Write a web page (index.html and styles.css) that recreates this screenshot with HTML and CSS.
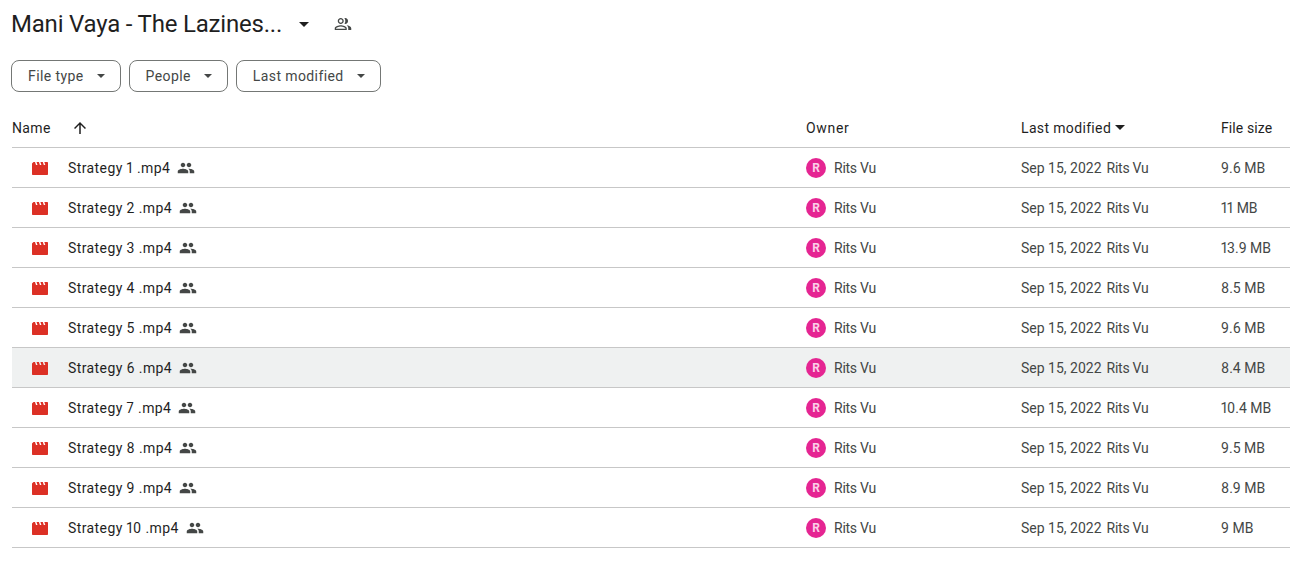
FILE: index.html
```html
<!DOCTYPE html>
<html lang="en">
<head>
    <meta charset="UTF-8">
    <title>Mani Vaya - The Laziness</title>
    <link rel="stylesheet" href="styles.css">
</head>
<body>
    <svg class="svg-defs" width="0" height="0">
        <symbol id="film" viewBox="0 0 16 13"><path d="M0 1.500 1.500 0H3l1 3h1.500L4.500 0h2.400l1 3h1.500l-1-3h2.400l1 3h1.500l-1-3H15c.6 0 1 .4 1 1v11c0 .6-.4 1-1 1H1c-.6 0-1-.4-1-1z"/></symbol>
        <symbol id="people" viewBox="0 0 24 24"><path d="M16 11c1.660 0 2.990-1.340 2.990-3S17.660 5 16 5s-3 1.340-3 3 1.340 3 3 3zm-8 0c1.660 0 2.990-1.340 2.990-3S9.660 5 8 5 5 6.340 5 8s1.340 3 3 3zm0 2c-2.330 0-7 1.170-7 3.500V19h14v-2.500C15 14.170 10.330 13 8 13zm8 0c-.29 0-.62.020-.97.050 1.160.84 1.970 1.970 1.970 3.450V19h6v-2.500c0-2.330-4.670-3.500-7-3.500z"/></symbol>
    </svg>

    <header class="title-bar">
        <h1>Mani Vaya - The Lazines...</h1>
        <span class="caret title-caret"></span>
        <svg class="shared-outline" viewBox="0 0 24 24"><path d="M9 12c2.200 0 4-1.800 4-4s-1.800-4-4-4-4 1.800-4 4 1.800 4 4 4zm0-6.200c1.200 0 2.200 1 2.200 2.200s-1 2.200-2.200 2.200-2.200-1-2.200-2.200 1-2.200 2.200-2.200zM15 12c2.200 0 3.700-1.800 3.700-4S17.200 4 15 4c-.4 0-.8.100-1.100.2.800 1 1.200 2.400 1.200 3.800s-.4 2.800-1.200 3.800c.3.100.7.200 1.100.2zM9 13.500c-2.700 0-8 1.300-8 4V20h16v-2.500c0-2.700-5.300-4-8-4zm-6.200 4.700v-.7c0-.7 3.300-2.200 6.200-2.200s6.200 1.500 6.200 2.200v.7H2.800zM16.800 13.700c1.300.9 2.200 2.200 2.200 3.800V20h4v-2.500c0-2.200-3.500-3.500-6.200-3.800z"/></svg>
    </header>

    <div class="filters">
        <button class="filter">File type<span class="caret small"></span></button>
        <button class="filter">People<span class="caret small"></span></button>
        <button class="filter">Last modified<span class="caret small"></span></button>
    </div>

    <div class="file-list">
        <div class="row head">
            <div class="name-head">Name
                <svg class="sort-arrow" viewBox="0 0 24 24"><path d="M4 12l1.410 1.410L11 7.830V20h2V7.830l5.580 5.590L20 12l-8-8-8 8z"/></svg>
            </div>
            <div class="owner-head">Owner</div>
            <div class="mod-head">Last modified<span class="caret"></span></div>
            <div class="size-head">File size</div>
        </div>

        <div class="row">
            <div class="name"><svg class="film"><use href="#film"/></svg><span>Strategy 1 .mp4</span><svg class="people"><use href="#people"/></svg></div>
            <div class="owner"><span class="avatar">R</span><span class="person">Rits Vu</span></div>
            <div class="modified"><span>Sep 15, 2022</span><span class="person">Rits Vu</span></div>
            <div class="size">9.6 MB</div>
        </div>
        <div class="row">
            <div class="name"><svg class="film"><use href="#film"/></svg><span>Strategy 2 .mp4</span><svg class="people"><use href="#people"/></svg></div>
            <div class="owner"><span class="avatar">R</span><span class="person">Rits Vu</span></div>
            <div class="modified"><span>Sep 15, 2022</span><span class="person">Rits Vu</span></div>
            <div class="size">11 MB</div>
        </div>
        <div class="row">
            <div class="name"><svg class="film"><use href="#film"/></svg><span>Strategy 3 .mp4</span><svg class="people"><use href="#people"/></svg></div>
            <div class="owner"><span class="avatar">R</span><span class="person">Rits Vu</span></div>
            <div class="modified"><span>Sep 15, 2022</span><span class="person">Rits Vu</span></div>
            <div class="size">13.9 MB</div>
        </div>
        <div class="row">
            <div class="name"><svg class="film"><use href="#film"/></svg><span>Strategy 4 .mp4</span><svg class="people"><use href="#people"/></svg></div>
            <div class="owner"><span class="avatar">R</span><span class="person">Rits Vu</span></div>
            <div class="modified"><span>Sep 15, 2022</span><span class="person">Rits Vu</span></div>
            <div class="size">8.5 MB</div>
        </div>
        <div class="row">
            <div class="name"><svg class="film"><use href="#film"/></svg><span>Strategy 5 .mp4</span><svg class="people"><use href="#people"/></svg></div>
            <div class="owner"><span class="avatar">R</span><span class="person">Rits Vu</span></div>
            <div class="modified"><span>Sep 15, 2022</span><span class="person">Rits Vu</span></div>
            <div class="size">9.6 MB</div>
        </div>
        <div class="row hover">
            <div class="name"><svg class="film"><use href="#film"/></svg><span>Strategy 6 .mp4</span><svg class="people"><use href="#people"/></svg></div>
            <div class="owner"><span class="avatar">R</span><span class="person">Rits Vu</span></div>
            <div class="modified"><span>Sep 15, 2022</span><span class="person">Rits Vu</span></div>
            <div class="size">8.4 MB</div>
        </div>
        <div class="row">
            <div class="name"><svg class="film"><use href="#film"/></svg><span>Strategy 7 .mp4</span><svg class="people"><use href="#people"/></svg></div>
            <div class="owner"><span class="avatar">R</span><span class="person">Rits Vu</span></div>
            <div class="modified"><span>Sep 15, 2022</span><span class="person">Rits Vu</span></div>
            <div class="size">10.4 MB</div>
        </div>
        <div class="row">
            <div class="name"><svg class="film"><use href="#film"/></svg><span>Strategy 8 .mp4</span><svg class="people"><use href="#people"/></svg></div>
            <div class="owner"><span class="avatar">R</span><span class="person">Rits Vu</span></div>
            <div class="modified"><span>Sep 15, 2022</span><span class="person">Rits Vu</span></div>
            <div class="size">9.5 MB</div>
        </div>
        <div class="row">
            <div class="name"><svg class="film"><use href="#film"/></svg><span>Strategy 9 .mp4</span><svg class="people"><use href="#people"/></svg></div>
            <div class="owner"><span class="avatar">R</span><span class="person">Rits Vu</span></div>
            <div class="modified"><span>Sep 15, 2022</span><span class="person">Rits Vu</span></div>
            <div class="size">8.9 MB</div>
        </div>
        <div class="row">
            <div class="name"><svg class="film"><use href="#film"/></svg><span>Strategy 10 .mp4</span><svg class="people"><use href="#people"/></svg></div>
            <div class="owner"><span class="avatar">R</span><span class="person">Rits Vu</span></div>
            <div class="modified"><span>Sep 15, 2022</span><span class="person">Rits Vu</span></div>
            <div class="size">9 MB</div>
        </div>
    </div>
</body>
</html>
```
FILE: styles.css
```css
* {
    box-sizing: border-box;
    margin: 0;
    padding: 0;
}

body {
    font-family: Roboto, "Liberation Sans", sans-serif;
    font-size: 14px;
    color: #444746;
    background: #fff;
    padding-left: 12px;
    overflow: hidden;
}

.svg-defs {
    display: block;
    height: 0;
}

.title-bar {
    display: flex;
    align-items: center;
    height: 48px;
}

.title-bar h1 {
    font-size: 24px;
    font-weight: 400;
    letter-spacing: -0.2px;
    color: #1f1f1f;
    width: 288px;
    margin-left: -1px;
    white-space: nowrap;
}

.caret {
    display: inline-block;
    width: 0;
    height: 0;
    border-left: 5px solid transparent;
    border-right: 5px solid transparent;
    border-top: 5px solid #1f1f1f;
}

.caret.small {
    border-left-width: 4px;
    border-right-width: 4px;
    border-top-width: 4px;
    border-top-color: #444746;
    margin-left: 13px;
}

.title-caret {
    margin-right: 25px;
}

.shared-outline {
    width: 18px;
    height: 18px;
    fill: #444746;
}

.filters {
    display: flex;
    gap: 8px;
    margin-top: 12px;
    margin-left: -1px;
}

.filter {
    display: flex;
    align-items: center;
    height: 32px;
    padding: 0 15px 0 16px;
    border: 1px solid #747775;
    border-radius: 8px;
    background: #fff;
    color: #444746;
    font-family: inherit;
    font-size: 14px;
    letter-spacing: 0.4px;
}

.file-list {
    margin-top: 16px;
}

.row {
    display: grid;
    grid-template-columns: 794px 215px 200px 1fr;
    align-items: center;
    height: 40px;
    border-bottom: 1px solid #c7c7c7;
}

.row.head {
    color: #1f1f1f;
    letter-spacing: 0.35px;
}

.row.hover {
    background: #eff1f1;
}

.name-head {
    display: flex;
    align-items: center;
}

.owner-head {
    letter-spacing: 0.7px;
}

.size-head {
    letter-spacing: 0.1px;
}

.sort-arrow {
    width: 18px;
    height: 18px;
    fill: #1f1f1f;
    margin-left: 20px;
}

.mod-head {
    display: flex;
    align-items: center;
}

.mod-head .caret {
    margin-left: 4px;
}

.name {
    display: flex;
    align-items: center;
    color: #1f1f1f;
    letter-spacing: 0.4px;
    font-variant-numeric: proportional-nums;
}

.film {
    width: 16px;
    height: 13px;
    fill: #dc3025;
    margin: 2px 20px 0;
}

.people {
    width: 18px;
    height: 18px;
    fill: #444746;
    margin-left: 7px;
}

.owner {
    display: flex;
    align-items: center;
    gap: 8px;
}

.person {
    letter-spacing: -0.25px;
}

.avatar {
    width: 20px;
    height: 20px;
    border-radius: 50%;
    background: #e52592;
    color: #fbd0e8;
    font-size: 12px;
    font-weight: 700;
    line-height: 20px;
    text-align: center;
}

.modified {
    display: flex;
    gap: 5px;
}

.size {
    font-variant-numeric: proportional-nums;
}
```
